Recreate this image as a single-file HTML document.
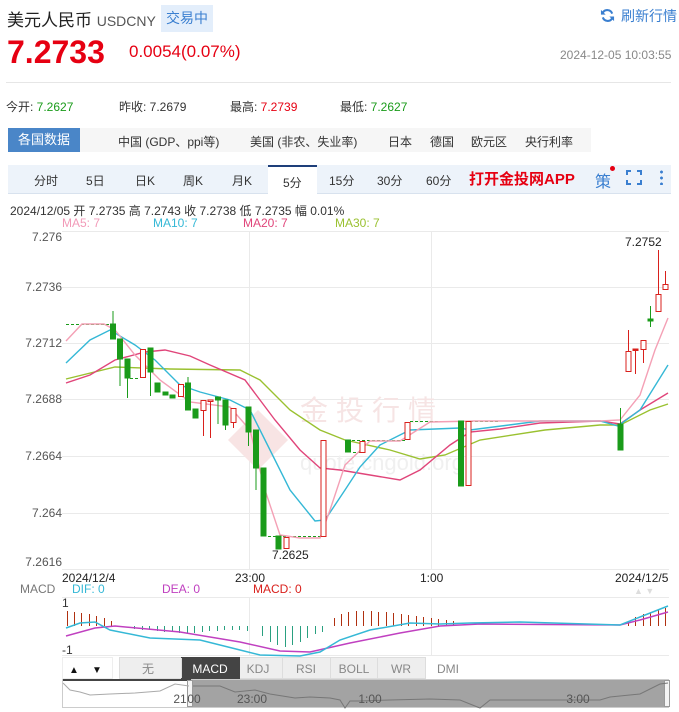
<!DOCTYPE html>
<html><head><meta charset="utf-8">
<style>
*{margin:0;padding:0;box-sizing:border-box}
body{width:679px;height:712px;background:#fff;font-family:"Liberation Sans","Noto Sans CJK SC",sans-serif;position:relative;overflow:hidden;color:#333}
.a{position:absolute;white-space:nowrap}
</style></head><body>
<div class="a" style="left:7px;top:6px;font-size:17px;color:#222">美元人民币 <span style="font-size:14px;color:#555">USDCNY</span></div>
<div class="a" style="left:161px;top:5px;width:52px;height:27px;background:#e3eefb;color:#3a7fd0;font-size:14px;line-height:27px;text-align:center">交易中</div>
<svg class="a" style="left:600px;top:8px" width="15" height="15" viewBox="0 0 16 16"><path d="M13 6A5.5 5.5 0 0 0 3 5M3 10a5.5 5.5 0 0 0 10 1" fill="none" stroke="#3a7fd0" stroke-width="2.2"/><path d="M1 2v5h5z M15 14V9h-5z" fill="#3a7fd0"/></svg>
<div class="a" style="left:621px;top:6px;font-size:14px;color:#3a7fd0">刷新行情</div>
<div class="a" style="left:7px;top:34px;font-size:32px;font-weight:bold;color:#e60012">7.2733</div>
<div class="a" style="left:129px;top:42px;font-size:17px;color:#e60012">0.0054(0.07%)</div>
<div class="a" style="left:560px;top:48px;font-size:12px;color:#888">2024-12-05 10:03:55</div>
<div class="a" style="left:6px;top:82px;width:665px;height:1px;background:#e6e6e6"></div>
<div class="a" style="left:6px;top:98px;font-size:12px;color:#333">今开: <span style="color:#1a9b1a">7.2627</span></div>
<div class="a" style="left:119px;top:98px;font-size:12px;color:#333">昨收: 7.2679</div>
<div class="a" style="left:230px;top:98px;font-size:12px;color:#333">最高: <span style="color:#e60012">7.2739</span></div>
<div class="a" style="left:340px;top:98px;font-size:12px;color:#333">最低: <span style="color:#1a9b1a">7.2627</span></div>
<div class="a" style="left:80px;top:128px;width:511px;height:24px;background:#f6f6f6"></div>
<div class="a" style="left:8px;top:128px;width:72px;height:24px;background:#4a86c8;color:#fff;font-size:13px;line-height:24px;text-align:center">各国数据</div>
<div class="a" style="left:118px;top:133px;font-size:12px;color:#333">中国 (GDP、ppi等)</div>
<div class="a" style="left:250px;top:133px;font-size:12px;color:#333">美国 (非农、失业率)</div>
<div class="a" style="left:388px;top:133px;font-size:12px;color:#333">日本</div>
<div class="a" style="left:430px;top:133px;font-size:12px;color:#333">德国</div>
<div class="a" style="left:471px;top:133px;font-size:12px;color:#333">欧元区</div>
<div class="a" style="left:525px;top:133px;font-size:12px;color:#333">央行利率</div>
<div class="a" style="left:8px;top:165px;width:663px;height:29px;background:#edf3fa;border-bottom:1px solid #d8e2ee"></div>
<div class="a" style="left:268px;top:165px;width:49px;height:29px;background:#fff;border-top:2px solid #1e3f7a"></div>
<div class="a" style="left:0;top:172px;font-size:12px;color:#333;width:679px">
<span class="a" style="left:34px">分时</span><span class="a" style="left:86px">5日</span><span class="a" style="left:135px">日K</span><span class="a" style="left:183px">周K</span><span class="a" style="left:232px">月K</span><span class="a" style="left:283px;top:2px">5分</span><span class="a" style="left:329px">15分</span><span class="a" style="left:377px">30分</span><span class="a" style="left:426px">60分</span></div>
<div class="a" style="left:469px;top:168px;font-size:15px;font-weight:bold;color:#e60012">打开金投网APP</div>
<div class="a" style="left:595px;top:168px;font-size:16px;color:#3a7fd0">策</div>
<div class="a" style="left:610px;top:166px;width:5px;height:5px;border-radius:50%;background:#e60012"></div>
<svg class="a" style="left:626px;top:170px" width="16" height="15"><path d="M1 5V1h4M11 1h4v4M15 10v4h-4M5 14H1v-4" fill="none" stroke="#3a7fd0" stroke-width="2"/></svg>
<div class="a" style="left:660px;top:169px;width:3px;height:16px;background:radial-gradient(circle,#3a7fd0 1.3px,transparent 1.6px) 0 0/3px 6px"></div>
<div class="a" style="left:10px;top:202px;font-size:12px;color:#333">2024/12/05 开 7.2735 高 7.2743 收 7.2738 低 7.2735 幅 0.01%</div>
<div class="a" style="left:0;top:216px;font-size:12px;width:679px">
<span class="a" style="left:62px;color:#f29ab8">MA5: 7</span><span class="a" style="left:153px;color:#35b8d6">MA10: 7</span><span class="a" style="left:243px;color:#e0457a">MA20: 7</span><span class="a" style="left:335px;color:#9ac130">MA30: 7</span></div>
<svg class="a" style="left:0;top:0" width="679" height="712">
<g stroke="#eaeaea" stroke-width="1">
<line x1="62" y1="231.5" x2="669" y2="231.5"/><line x1="62" y1="287.5" x2="669" y2="287.5"/><line x1="62" y1="343.5" x2="669" y2="343.5"/><line x1="62" y1="399.5" x2="669" y2="399.5"/><line x1="62" y1="456.5" x2="669" y2="456.5"/><line x1="62" y1="513.5" x2="669" y2="513.5"/><line x1="62" y1="569.5" x2="669" y2="569.5"/>
<line x1="249.5" y1="231" x2="249.5" y2="570"/><line x1="431.5" y1="231" x2="431.5" y2="570"/>
<line x1="62" y1="597.5" x2="669" y2="597.5"/><line x1="62" y1="655.5" x2="669" y2="655.5"/>
<line x1="249.5" y1="597" x2="249.5" y2="656"/><line x1="431.5" y1="597" x2="431.5" y2="656"/>
</g>
<g font-size="12" fill="#555" text-anchor="end" font-family="Liberation Sans,sans-serif">
<text x="62" y="241">7.276</text><text x="62" y="291">7.2736</text><text x="62" y="347">7.2712</text><text x="62" y="403">7.2688</text><text x="62" y="460">7.2664</text><text x="62" y="517">7.264</text><text x="62" y="566">7.2616</text>
</g>
<path d="M228 440 L258 410 L288 440 L258 470Z" fill="#f8e4e4"/>
<text x="300" y="420" font-size="28" fill="#f6e4e4" font-family="Noto Sans CJK SC,sans-serif" letter-spacing="8">金投行情</text>
<text x="300" y="470" font-size="22" fill="#f0f0f0" font-family="Liberation Sans,sans-serif">quote.cngold.org</text>
<g stroke="#1a9b1a" stroke-dasharray="3,2" fill="none">
<line x1="66" y1="324.5" x2="110" y2="324.5"/><line x1="130" y1="378.5" x2="140" y2="378.5"/><line x1="268" y1="536.5" x2="322" y2="536.5"/><line x1="352" y1="440.5" x2="405" y2="440.5"/><line x1="410" y1="421.5" x2="500" y2="421.5"/><line x1="353" y1="452.5" x2="360" y2="452.5"/>
</g>
<g fill="none" stroke-width="1.4">
<polyline stroke="#9ac130" points="66,379 115,367 170,369 240,370 260,380 290,410 320,430 345,440 390,450 420,459 445,455 480,440 545,430 600,425 620,425 650,410 668,404"/>
<polyline stroke="#e0457a" points="66,383 90,375 115,360 145,352 165,350 190,356 210,365 245,380 275,420 300,450 320,468 340,470 370,475 400,480 420,470 450,445 470,432 500,429 540,423 600,421 620,424 640,410 668,393"/>
<polyline stroke="#35b8d6" points="66,363 90,340 110,330 135,345 155,360 180,385 200,392 230,400 250,410 265,440 290,490 315,521 325,520 345,490 360,467 380,445 410,430 460,428 470,430 540,421 600,421 618,426 640,410 668,365"/>
<polyline stroke="#f4a0b5" points="66,341 82,324 104,324 115,330 135,355 160,380 190,402 230,407 250,430 265,490 280,535 300,538 320,538 330,510 345,465 370,441 400,441 430,422 475,421 600,421 620,420 640,395 655,350 668,318"/>
</g>
<g fill="#1a9b1a" stroke="#1a9b1a">
<line x1="113" y1="311" x2="113" y2="339"/><rect x="110.5" y="324" width="5" height="15"/>
<line x1="120" y1="339" x2="120" y2="386"/><rect x="117.5" y="339" width="5" height="20"/>
<line x1="127.5" y1="359" x2="127.5" y2="398"/><rect x="125" y="359" width="5" height="19"/>
<line x1="150.5" y1="348" x2="150.5" y2="396"/><rect x="148" y="348" width="5" height="24"/>
<rect x="155" y="383" width="5" height="9"/><rect x="163" y="392" width="5" height="3"/><rect x="170" y="395" width="5" height="3"/>
<line x1="188" y1="377" x2="188" y2="410"/><rect x="185.5" y="383" width="5" height="27"/>
<rect x="193" y="409" width="5" height="9"/>
<line x1="218" y1="397" x2="218" y2="424"/><rect x="215.5" y="397" width="5" height="3"/>
<line x1="225.5" y1="400" x2="225.5" y2="430"/><rect x="223" y="400" width="5" height="25"/>
<line x1="248.5" y1="407" x2="248.5" y2="446"/><rect x="246" y="407" width="5" height="25"/>
<line x1="256" y1="430" x2="256" y2="490"/><rect x="253.5" y="430" width="5" height="38"/>
<rect x="261" y="468" width="5" height="68"/><rect x="276" y="536" width="5" height="13"/>
<rect x="345.5" y="440" width="5" height="12"/>
<rect x="458.5" y="421" width="5" height="65"/>
<line x1="620.5" y1="408" x2="620.5" y2="450"/><rect x="618" y="424" width="5" height="26"/>
<line x1="650.5" y1="306" x2="650.5" y2="327"/><rect x="648" y="319" width="5" height="2"/>
</g>
<g fill="#fff" stroke="#d9201c">
<rect x="140.5" y="349.5" width="5" height="28"/>
<rect x="178.5" y="384.5" width="5" height="12"/>
<line x1="203.5" y1="411" x2="203.5" y2="436"/><rect x="201" y="400.5" width="5" height="10"/>
<line x1="210.5" y1="400" x2="210.5" y2="438"/><rect x="208" y="400" width="5" height="1.5"/>
<line x1="233.5" y1="423" x2="233.5" y2="428"/><rect x="231" y="408.5" width="5" height="14"/>
<rect x="284" y="537.5" width="5" height="11"/>
<rect x="321" y="440.5" width="5" height="96"/>
<rect x="360" y="441.5" width="5" height="11"/>
<rect x="405" y="422.5" width="5" height="17"/>
<rect x="466" y="421.5" width="5" height="64"/>
<line x1="628.5" y1="330" x2="628.5" y2="351"/><rect x="626" y="351.5" width="5" height="20"/>
<line x1="635.5" y1="349" x2="635.5" y2="374"/><rect x="633" y="349" width="5" height="1.5" fill="#d9201c"/>
<line x1="643.5" y1="349" x2="643.5" y2="363"/><rect x="641" y="340.5" width="5" height="9"/>
<line x1="658.5" y1="250" x2="658.5" y2="294"/><rect x="656" y="294.5" width="5" height="17"/>
<line x1="665.5" y1="271" x2="665.5" y2="284"/><rect x="663" y="284.5" width="5" height="5"/>
</g>
<g font-size="12" fill="#222" font-family="Liberation Sans,sans-serif">
<text x="625" y="246">7.2752</text><text x="272" y="559">7.2625</text>
<text x="62" y="582">2024/12/4</text><text x="235" y="582">23:00</text><text x="420" y="582">1:00</text><text x="615" y="582">2024/12/5</text>
</g>
<g font-size="12" font-family="Liberation Sans,sans-serif">
<text x="20" y="593" fill="#777">MACD</text><text x="72" y="593" fill="#35b8d6">DIF: 0</text><text x="162" y="593" fill="#c040c0">DEA: 0</text><text x="253" y="593" fill="#d9201c">MACD: 0</text>
<text x="62" y="607" fill="#333">1</text><text x="62" y="654" fill="#333">-1</text>
<text x="634" y="594" fill="#ddd" font-size="9">▲ ▼</text>
</g>
<g stroke="#b03010" stroke-width="1">
<line x1="67.5" y1="626" x2="67.5" y2="611"/><line x1="74.5" y1="626" x2="74.5" y2="612"/><line x1="81.5" y1="626" x2="81.5" y2="613"/><line x1="89.5" y1="626" x2="89.5" y2="614"/><line x1="96.5" y1="626" x2="96.5" y2="616"/><line x1="104.5" y1="626" x2="104.5" y2="618"/><line x1="111.5" y1="626" x2="111.5" y2="621"/>
<line x1="334.5" y1="626" x2="334.5" y2="618"/><line x1="341.5" y1="626" x2="341.5" y2="614"/><line x1="348.5" y1="626" x2="348.5" y2="612"/><line x1="356.5" y1="626" x2="356.5" y2="611"/><line x1="363.5" y1="626" x2="363.5" y2="611"/><line x1="371.5" y1="626" x2="371.5" y2="611"/><line x1="378.5" y1="626" x2="378.5" y2="612"/><line x1="386.5" y1="626" x2="386.5" y2="612"/><line x1="393.5" y1="626" x2="393.5" y2="613"/><line x1="401.5" y1="626" x2="401.5" y2="614"/><line x1="408.5" y1="626" x2="408.5" y2="615"/><line x1="416.5" y1="626" x2="416.5" y2="616"/><line x1="423.5" y1="626" x2="423.5" y2="617"/><line x1="431.5" y1="626" x2="431.5" y2="618"/><line x1="438.5" y1="626" x2="438.5" y2="619"/><line x1="446.5" y1="626" x2="446.5" y2="620"/><line x1="453.5" y1="626" x2="453.5" y2="621"/>
<line x1="628.5" y1="626" x2="628.5" y2="621"/><line x1="635.5" y1="626" x2="635.5" y2="617"/><line x1="643.5" y1="626" x2="643.5" y2="614"/><line x1="650.5" y1="626" x2="650.5" y2="612"/><line x1="658.5" y1="626" x2="658.5" y2="610"/><line x1="665.5" y1="626" x2="665.5" y2="608"/>
</g>
<g stroke="#2aa080" stroke-width="1">
<line x1="134.5" y1="626" x2="134.5" y2="629"/><line x1="142.5" y1="626" x2="142.5" y2="630"/><line x1="149.5" y1="626" x2="149.5" y2="630"/><line x1="157.5" y1="626" x2="157.5" y2="631"/><line x1="164.5" y1="626" x2="164.5" y2="632"/><line x1="172.5" y1="626" x2="172.5" y2="632"/><line x1="179.5" y1="626" x2="179.5" y2="633"/><line x1="187.5" y1="626" x2="187.5" y2="634"/><line x1="194.5" y1="626" x2="194.5" y2="633"/><line x1="202.5" y1="626" x2="202.5" y2="632"/><line x1="209.5" y1="626" x2="209.5" y2="631"/><line x1="217.5" y1="626" x2="217.5" y2="631"/><line x1="224.5" y1="626" x2="224.5" y2="630"/><line x1="232.5" y1="626" x2="232.5" y2="630"/><line x1="239.5" y1="626" x2="239.5" y2="630"/><line x1="247.5" y1="626" x2="247.5" y2="631"/>
<line x1="262.5" y1="626" x2="262.5" y2="636"/><line x1="270.5" y1="626" x2="270.5" y2="642"/><line x1="277.5" y1="626" x2="277.5" y2="645"/><line x1="285.5" y1="626" x2="285.5" y2="647"/><line x1="292.5" y1="626" x2="292.5" y2="645"/><line x1="300.5" y1="626" x2="300.5" y2="642"/><line x1="307.5" y1="626" x2="307.5" y2="638"/><line x1="315.5" y1="626" x2="315.5" y2="634"/><line x1="322.5" y1="626" x2="322.5" y2="632"/>
</g>
<g fill="none" stroke-width="1.5">
<polyline stroke="#c040c0" points="66,636 95,628 115,626 180,632 240,642 280,651 310,652 350,643 400,633 440,626 480,624 620,625 640,620 668,612"/>
<polyline stroke="#35b8d6" points="66,628 80,623 95,622 110,630 150,638 200,640 240,650 260,655 300,656 320,652 340,640 370,630 410,623 440,624 470,623 520,622 620,625 640,617 668,606"/>
</g>
<rect x="62.5" y="657.5" width="50" height="21" fill="#fff" stroke="#eee"/>
<rect x="119.5" y="657.5" width="306" height="21" fill="#eee" stroke="#ddd"/>
<rect x="181" y="657" width="59" height="22" fill="#444"/>
<g stroke="#ddd"><line x1="181.5" y1="658" x2="181.5" y2="678"/><line x1="282.5" y1="658" x2="282.5" y2="678"/><line x1="330.5" y1="658" x2="330.5" y2="678"/><line x1="377.5" y1="658" x2="377.5" y2="678"/></g>
<g font-size="12" font-family="Liberation Sans,Noto Sans CJK SC,sans-serif" text-anchor="middle">
<text x="74" y="673" fill="#111" font-size="10">▲</text><text x="97" y="673" fill="#111" font-size="10">▼</text>
<text x="148" y="673" fill="#888">无</text><text x="210" y="673" fill="#fff">MACD</text><text x="258" y="673" fill="#888">KDJ</text><text x="306" y="673" fill="#888">RSI</text><text x="354" y="673" fill="#888">BOLL</text><text x="401" y="673" fill="#888">WR</text><text x="448" y="673" fill="#888">DMI</text>
</g>
<rect x="62.5" y="679.5" width="606" height="28" fill="#fff" stroke="#ccc"/>
<rect x="63" y="679" width="128" height="2" fill="#444"/>
<rect x="191" y="680" width="477" height="27" fill="#a3a3a3"/>
<rect x="187.5" y="680.5" width="5" height="26" fill="#f4f4f4" stroke="#999"/>
<rect x="664.5" y="680.5" width="5" height="26" fill="#f4f4f4" stroke="#999"/>
<polyline fill="none" stroke="#aaa" points="63,683 70,690 80,692 90,695 110,694 135,693 160,691 175,684 189,686"/>
<polyline fill="none" stroke="#777" points="193,686 220,686 235,692 255,690 270,694 295,698 310,697 330,698 340,700 345,708 350,701 360,701 390,700 430,699 460,700 480,708 490,700 600,700 610,697 640,694 660,684 668,683"/>
<g font-size="12" fill="#555" font-family="Liberation Sans,sans-serif" text-anchor="middle"><text x="180" y="703">21</text><text x="194" y="703">00</text><text x="252" y="703">23:00</text><text x="370" y="703">1:00</text><text x="578" y="703">3:00</text></g>
</svg>
</body></html>
